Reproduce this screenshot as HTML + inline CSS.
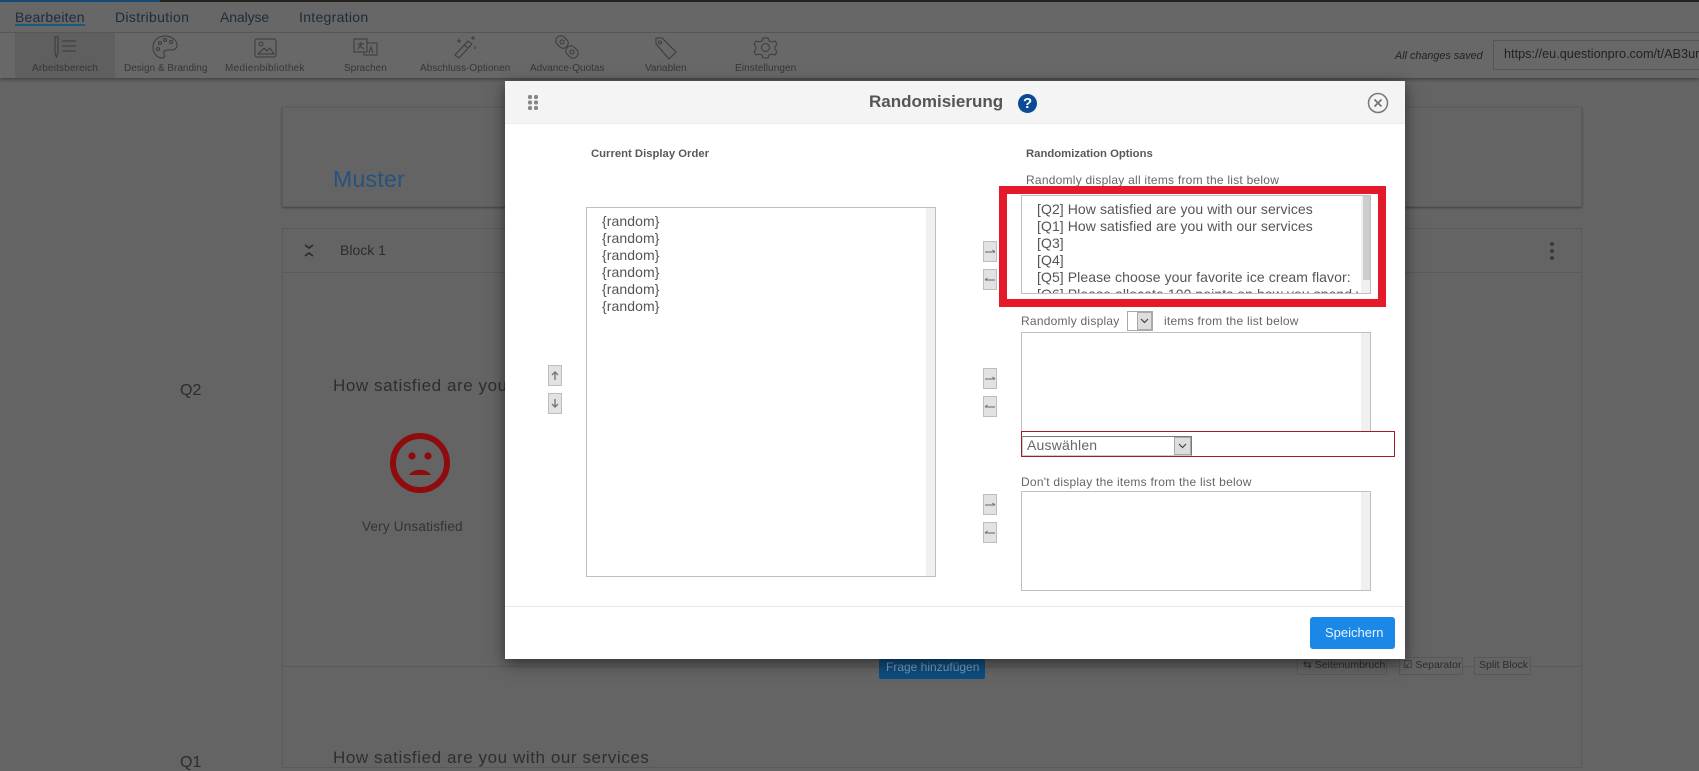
<!DOCTYPE html>
<html><head><meta charset="utf-8"><style>
*{box-sizing:border-box}
html,body{margin:0;padding:0;width:1699px;height:765px;overflow:hidden;background:#646464;font-family:"Liberation Sans","DejaVu Sans",sans-serif}
.a{position:absolute}
.t{position:absolute;white-space:nowrap;line-height:1}
.nav{font-size:14px;color:#1b2c40;top:10px}
.tb{font-size:10px;color:#363636;top:64px}
.lbl{font-size:12px;color:#666;letter-spacing:.02em}
.b{font-weight:bold;color:#595959;font-size:11.3px}
.list{position:absolute;background:#fff;border:1px solid #bfbfbf;overflow:hidden}
.list:after{content:"";position:absolute;right:0;top:0;bottom:0;width:9px;background:#f0f0f0}
.btn{position:absolute;width:14px;height:21px;background:#e2e2e2;border:1px solid #bdbdbd;color:#555}
.btn svg{position:absolute;left:0;top:0}
.item{font-size:14px;line-height:17px;color:#555;white-space:nowrap;letter-spacing:.08px}
svg{display:block}
</style></head><body>
<div class="a" style="left:0;top:0;width:1699px;height:2px;background:#222"></div>
<div class="a" style="left:0;top:0;width:160px;height:2px;background:#164a75"></div>
<div class="a" style="left:0;top:2px;width:1699px;height:30px;background:#676767"></div>
<div class="a" style="left:0;top:32px;width:1699px;height:1px;background:#585858"></div>
<div class="a" style="left:0;top:33px;width:1699px;height:45px;background:#686868;box-shadow:0 2px 3px rgba(0,0,0,.3)"></div>
<div class="a" style="left:15px;top:33px;width:100px;height:45px;background:#5f5f5f"></div>
<div class="t nav" style="left:15px;letter-spacing:.2px">Bearbeiten</div>
<div class="a" style="left:15px;top:24px;width:70px;height:2px;background:#1c5a7a"></div>
<div class="t nav" style="left:115px;letter-spacing:.35px">Distribution</div>
<div class="t nav" style="left:220px;letter-spacing:-.1px">Analyse</div>
<div class="t nav" style="left:299px;letter-spacing:.3px">Integration</div>

<div class="t tb" style="left:32px;letter-spacing:.15px">Arbeitsbereich</div>
<div class="t tb" style="left:124px">Design &amp; Branding</div>
<div class="t tb" style="left:225px;letter-spacing:.3px">Medienbibliothek</div>
<div class="t tb" style="left:344px">Sprachen</div>
<div class="t tb" style="left:420px;letter-spacing:.05px">Abschluss-Optionen</div>
<div class="t tb" style="left:530px">Advance-Quotas</div>
<div class="t tb" style="left:645px">Variablen</div>
<div class="t tb" style="left:735px;letter-spacing:.1px">Einstellungen</div>

<svg class="a" style="left:0;top:30px" width="840" height="32" fill="none" stroke="#3a3a3a" stroke-width="1">
<path d="M55 7h3v16l-1.500 4-1.500-4zM62 11h14M62 16h14M62 21h14"/>
<path d="M165 6c-7 0-12 5-12 11 0 6 4 11 9 11 3 0 3-2 2-4-1-3 1-4 4-4h4c3 0 5-2 5-5 0-5-6-9-12-9z"/>
<circle cx="160" cy="13" r="1.500"/><circle cx="165" cy="10" r="1.500"/><circle cx="171" cy="12" r="1.500"/><circle cx="158" cy="19" r="1.500"/>
<rect x="255" y="9" width="21" height="18" rx="2"/><path d="M258 24l6-6 3 3 3-3 4 6zM261 12a2 2 0 1 1-.1 0"/>
<path d="M354 9h13v13h-13zM367 13h10v12h-13v-3M358 14h6M361 12v2l-3 5M360 16l4 3"/><path d="M369 23l2-6 2 6"/>
<path d="M455 25l13-14 4 3-13 14zM464 15l4 3M459 9v4M457 11h4M473 6v4M471 8h4M475 16v3"/>
<rect x="555.500" y="7" width="13" height="10" rx="4.500" transform="rotate(45 562 12)"/><rect x="560" y="10" width="4" height="4" rx="2" transform="rotate(45 562 12)"/><rect x="565.500" y="17" width="13" height="10" rx="4.500" transform="rotate(45 572 22)"/><rect x="570" y="20" width="4" height="4" rx="2" transform="rotate(45 572 22)"/>
<path d="M656 8h6l14 14-7 7-13-15zM660 11a1.500 1.500 0 1 0 .1 0"/>
<path d="M763 8h5l1 3 3 1 3-1 2 3-2 3v2l2 3-2 3-3-1-3 1-1 3h-5l-1-3-3-1-3 1-2-3 2-3v-2l-2-3 2-3 3 1 3-1z"/><circle cx="765.500" cy="17.500" r="4"/>
</svg>

<div class="t" style="left:1395px;top:50.500px;font-size:10.800px;font-style:italic;color:#222">All changes saved</div>
<div class="a" style="left:1493px;top:40px;width:210px;height:30px;border:1px solid #555;background:#686868"></div>
<div class="t" style="left:1504px;top:48px;font-size:12.700px;color:#222">https://eu.questionpro.com/t/AB3ur</div>

<!-- cards -->
<div class="a" style="left:282px;top:107px;width:1300px;height:100px;background:#646464;border:1px solid #5c5c5c;box-shadow:0 1px 2px rgba(0,0,0,.35)"></div>
<div class="t" style="left:333px;top:168px;font-size:23px;color:#25527f;letter-spacing:.3px">Muster</div>
<div class="a" style="left:282px;top:228px;width:1300px;height:540px;background:#646464;border:1px solid #5a5a5a"></div>
<div class="a" style="left:283px;top:272px;width:1298px;height:1px;background:#5a5a5a"></div>
<svg class="a" style="left:303px;top:243px" width="12" height="16" fill="none" stroke="#2a2a2a" stroke-width="1.600"><path d="M2 2l4 3 4-3M2 13l4-3 4 3"/></svg>
<div class="t" style="left:340px;top:243px;font-size:14px;color:#2c2c2c">Block 1</div>
<svg class="a" style="left:1548px;top:240px" width="8" height="22" fill="#3a3a3a"><circle cx="4" cy="4" r="2"/><circle cx="4" cy="11" r="2"/><circle cx="4" cy="18" r="2"/></svg>
<div class="t" style="left:180px;top:383px;font-size:16px;color:#2c2c2c">Q2</div>
<div class="t" style="left:333px;top:377px;font-size:17px;color:#2e2e2e;letter-spacing:.58px">How satisfied are you with our services</div>
<svg class="a" style="left:388px;top:431px" width="64" height="64"><circle cx="32" cy="32" r="27" fill="none" stroke="#8e0b0e" stroke-width="6"/><circle cx="24" cy="25" r="3.600" fill="#8e0b0e"/><circle cx="40" cy="25" r="3.600" fill="#8e0b0e"/><path d="M21 44c4-7 18-7 22 0z" fill="#8e0b0e"/></svg>
<div class="t" style="left:362px;top:520px;font-size:13.500px;color:#333;letter-spacing:.2px">Very Unsatisfied</div>
<div class="a" style="left:283px;top:666px;width:1298px;height:1px;background:#5a5a5a"></div>
<div class="a" style="left:879px;top:659px;width:106px;height:20px;background:#0e4c7e;border-radius:2px"></div>
<div class="t" style="left:886px;top:661px;font-size:12px;color:#7d9db8">Frage hinzufügen</div>
<div class="a" style="left:1297px;top:657px;width:90px;height:18px;border:1px solid #585858;background:#646464"></div>
<div class="t" style="left:1303px;top:660px;font-size:10.500px;color:#2c2c2c">⇆ Seitenumbruch</div>
<div class="a" style="left:1399px;top:657px;width:64px;height:18px;border:1px solid #585858;background:#646464"></div>
<div class="t" style="left:1403px;top:660px;font-size:10.500px;color:#2c2c2c">☑ Separator</div>
<div class="a" style="left:1474px;top:657px;width:57px;height:18px;border:1px solid #585858;background:#646464"></div>
<div class="t" style="left:1479px;top:660px;font-size:10.500px;color:#2c2c2c">Split Block</div>
<div class="t" style="left:180px;top:755px;font-size:16px;color:#2c2c2c">Q1</div>
<div class="t" style="left:333px;top:749px;font-size:17px;color:#2e2e2e;letter-spacing:.58px">How satisfied are you with our services</div>

<!-- modal -->
<div class="a" style="left:505px;top:81px;width:900px;height:578px;background:#fff;box-shadow:0 4px 14px rgba(0,0,0,.55)"></div>
<div class="a" style="left:505px;top:81px;width:900px;height:43px;background:#f4f4f4;border-bottom:1px solid #ececec"></div>
<svg class="a" style="left:527px;top:93px" width="14" height="18" fill="#888"><rect x="1" y="2" width="4" height="4" rx="1.500"/><rect x="7" y="2" width="4" height="4" rx="1.500"/><rect x="1" y="7.500" width="4" height="4" rx="1.500"/><rect x="7" y="7.500" width="4" height="4" rx="1.500"/><rect x="1" y="13" width="4" height="4" rx="1.500"/><rect x="7" y="13" width="4" height="4" rx="1.500"/></svg>
<div class="t" style="left:869px;top:93px;font-size:17px;font-weight:bold;color:#555">Randomisierung</div>
<div class="a" style="left:1018px;top:94px;width:19px;height:19px;border-radius:50%;background:#0b4a96"></div>
<div class="t" style="left:1023px;top:96px;font-size:15px;font-weight:bold;color:#fff">?</div>
<svg class="a" style="left:1367px;top:92px" width="22" height="22" fill="none" stroke="#777"><circle cx="11" cy="11" r="9.500" stroke-width="1.500"/><path d="M7.500 7.500l7 7M14.500 7.500l-7 7" stroke-width="1.800"/></svg>

<div class="t b" style="left:591px;top:149px">Current Display Order</div>
<div class="t b" style="left:1026px;top:149px">Randomization Options</div>
<div class="t lbl" style="left:1026px;top:174px">Randomly display all items from the list below</div>

<div class="list" style="left:586px;top:207px;width:350px;height:370px;padding:5px 0 0 15px">
<div class="item">{random}</div><div class="item">{random}</div><div class="item">{random}</div><div class="item">{random}</div><div class="item">{random}</div><div class="item">{random}</div>
</div>

<div class="btn" style="left:548px;top:365px"><svg width="12" height="19" fill="none" stroke="#777" stroke-width="1.400"><path d="M6 14V6M3 9l3-3 3 3"/></svg></div>
<div class="btn" style="left:548px;top:393px"><svg width="12" height="19" fill="none" stroke="#777" stroke-width="1.400"><path d="M6 5v8M3 10l3 3 3-3"/></svg></div>

<div class="list" style="left:1021px;top:195px;width:350px;height:99px;padding:5px 0 0 15px">
<div class="item">[Q2] How satisfied are you with our services</div>
<div class="item">[Q1] How satisfied are you with our services</div>
<div class="item">[Q3]</div><div class="item">[Q4]</div>
<div class="item">[Q5] Please choose your favorite ice cream flavor:</div>
<div class="item">[Q6] Please allocate 100 points on how you spend y</div>
</div>
<div class="a" style="left:1363px;top:196px;width:7px;height:84px;background:#cdcdcd"></div>
<div class="a" style="left:999px;top:186px;width:387px;height:121px;border:8px solid #e4192a"></div>

<div class="btn" style="left:983px;top:241px"><svg width="12" height="19" fill="none" stroke="#666"><path d="M1 10h10M8.500 8l2.500 2"/></svg></div>
<div class="btn" style="left:983px;top:269px"><svg width="12" height="19" fill="none" stroke="#666"><path d="M11 10H1M3.500 8L1 10"/></svg></div>

<div class="t lbl" style="left:1021px;top:315px">Randomly display</div>
<div class="a" style="left:1127px;top:311px;width:26px;height:20px;border:1px solid #aaa;background:#fff"></div>
<div class="a" style="left:1137px;top:312px;width:15px;height:18px;background:#ddd;border:1px solid #aaa"></div>
<svg class="a" style="left:1139px;top:317px" width="11" height="8" fill="none" stroke="#444" stroke-width="1.200"><path d="M2 2l3.500 3.500L9 2"/></svg>
<div class="t lbl" style="left:1164px;top:315px">items from the list below</div>

<div class="list" style="left:1021px;top:332px;width:350px;height:100px"></div>
<div class="btn" style="left:983px;top:368px"><svg width="12" height="19" fill="none" stroke="#666"><path d="M1 10h10M8.500 8l2.500 2"/></svg></div>
<div class="btn" style="left:983px;top:396px"><svg width="12" height="19" fill="none" stroke="#666"><path d="M11 10H1M3.500 8L1 10"/></svg></div>

<div class="a" style="left:1021px;top:431px;width:374px;height:26px;background:#fff;border:1px solid #a01c2a"></div>
<div class="a" style="left:1022px;top:436px;width:170px;height:20px;border:1px solid #777;border-bottom-color:#ccc;border-left-color:#ccc;background:#fff"></div>
<div class="t" style="left:1027px;top:438px;font-size:14px;color:#666;letter-spacing:.2px">Auswählen</div>
<div class="a" style="left:1174px;top:437px;width:17px;height:18px;background:#ddd;border:1px solid #aaa"></div>
<svg class="a" style="left:1177px;top:442px" width="11" height="8" fill="none" stroke="#444" stroke-width="1.200"><path d="M2 2l3.500 3.500L9 2"/></svg>

<div class="t lbl" style="left:1021px;top:476px">Don't display the items from the list below</div>
<div class="list" style="left:1021px;top:491px;width:350px;height:100px"></div>
<div class="btn" style="left:983px;top:494px"><svg width="12" height="19" fill="none" stroke="#666"><path d="M1 10h10M8.500 8l2.500 2"/></svg></div>
<div class="btn" style="left:983px;top:522px"><svg width="12" height="19" fill="none" stroke="#666"><path d="M11 10H1M3.500 8L1 10"/></svg></div>

<div class="a" style="left:505px;top:606px;width:900px;height:1px;background:#e8e8e8"></div>
<div class="a" style="left:1310px;top:617px;width:85px;height:32px;background:#1b87e6;border-radius:3px"></div>
<div class="t" style="left:1325px;top:626px;font-size:13px;color:#e8f4ff">Speichern</div>
</body></html>
